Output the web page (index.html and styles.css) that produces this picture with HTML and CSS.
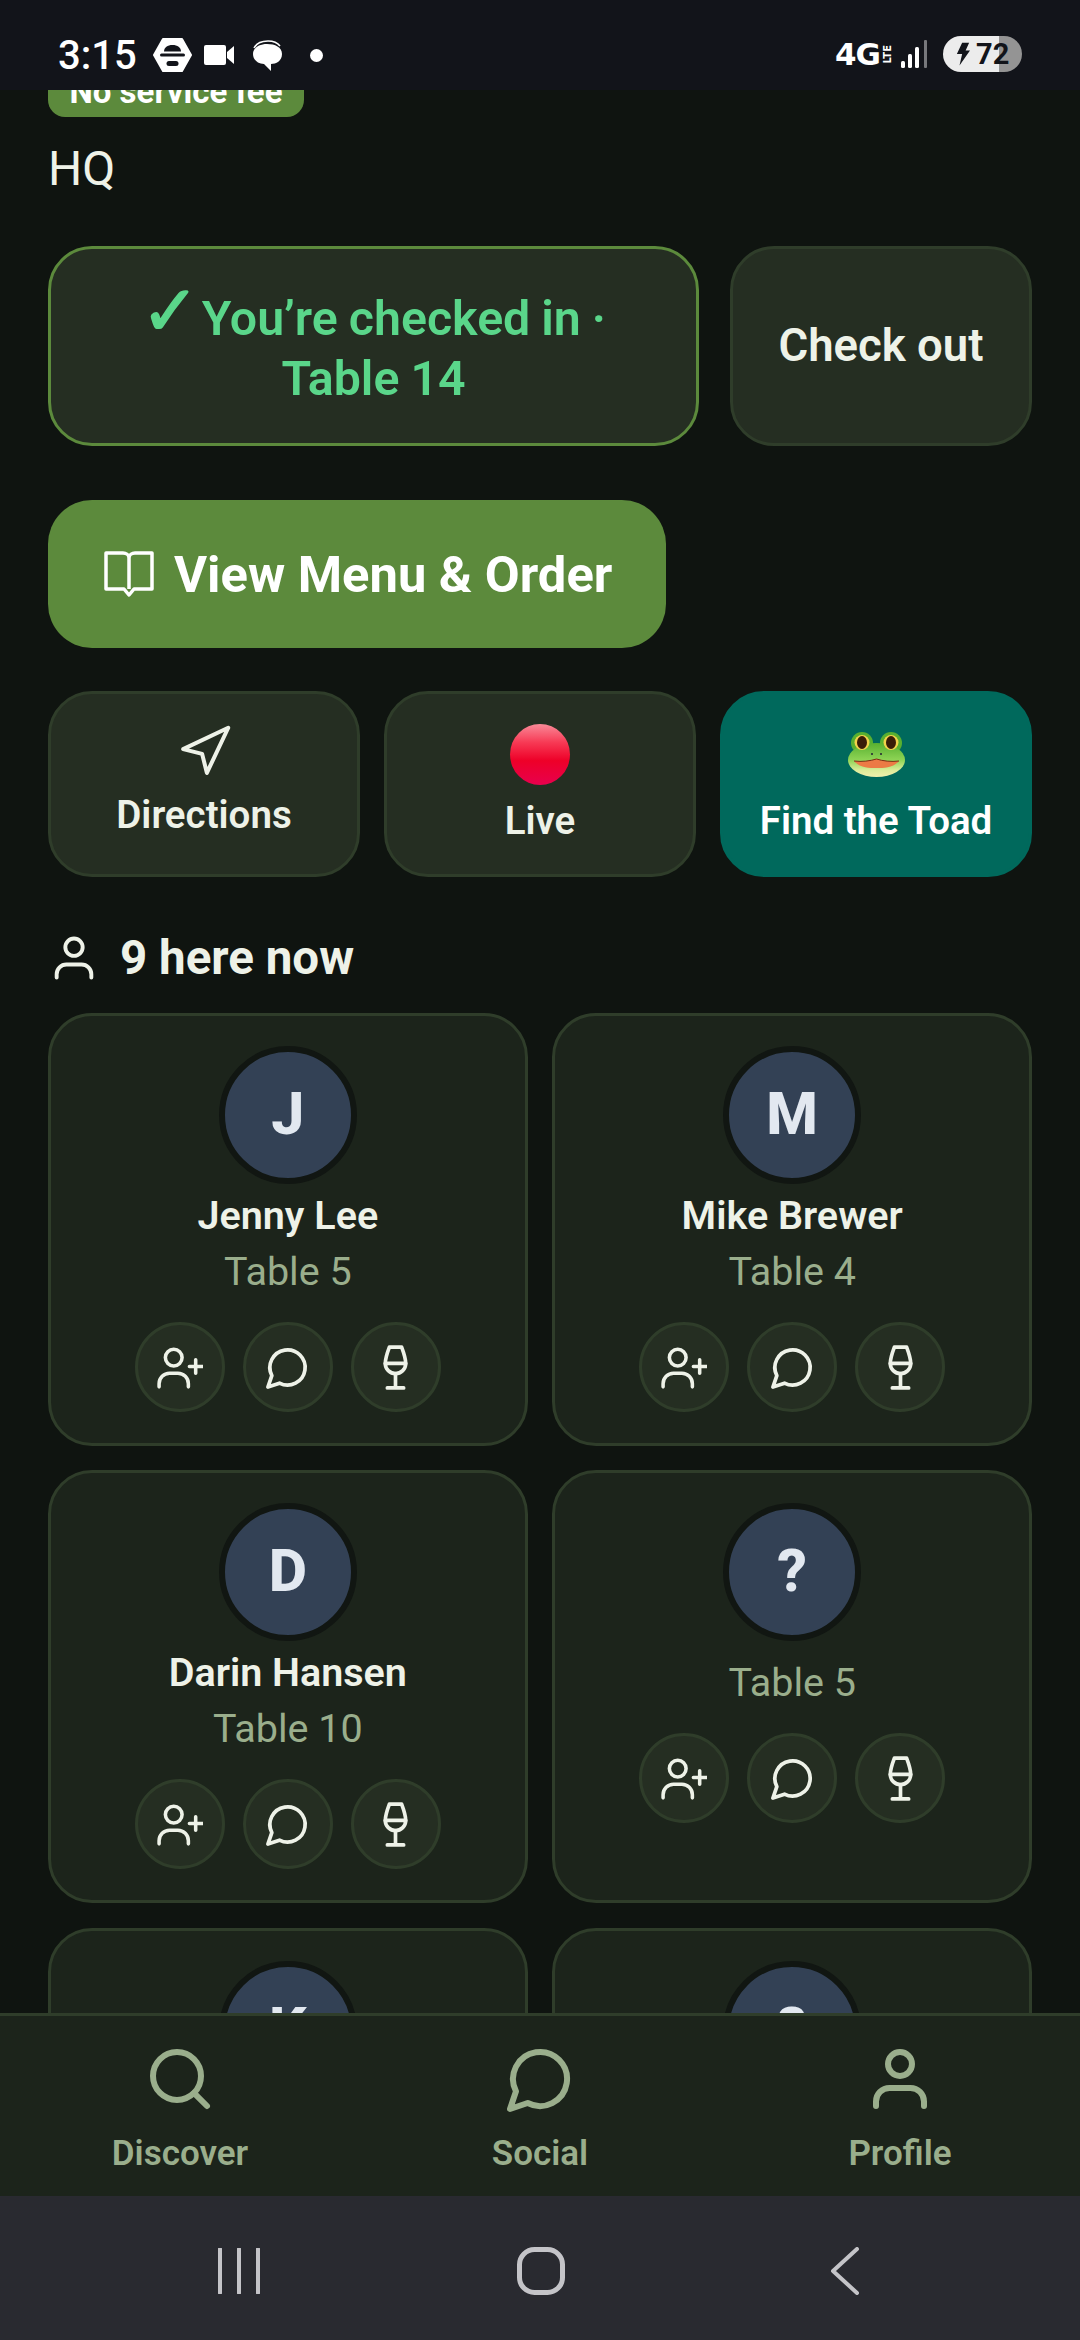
FILE: index.html
```html
<!DOCTYPE html>
<html lang="en">

<head>
    <meta charset="UTF-8">
    <title>HQ</title>
    <link rel="stylesheet" href="styles.css">
</head>

<body>
    <svg class="sprites" width="0" height="0">
        <symbol id="i-user" viewBox="0 0 24 24">
            <circle cx="12" cy="7" r="4" />
            <path d="M20 21v-1.5a4.5 4.5 0 0 0-4.5-4.5h-7a4.5 4.5 0 0 0-4.5 4.5v1.5" />
        </symbol>
        <symbol id="i-user-plus" viewBox="0 0 44 44">
            <circle cx="16" cy="13" r="8" />
            <path d="M2 41v-3a10 10 0 0 1 10-10h8a10 10 0 0 1 10 10v3" />
            <path d="M37 15v13M31 21.500h13" />
        </symbol>
        <symbol id="i-chat" viewBox="0 0 24 24">
            <path d="M7.900 20A9 9 0 1 0 4 16.100L2 22Z" />
        </symbol>
        <symbol id="i-wine" viewBox="0 0 24 24">
            <path d="M8 22h8M7 10h10M12 15v7" />
            <path d="M12 15a5 5 0 0 0 5-5c0-2-.5-4-2-8H9c-1.500 4-2 6-2 8a5 5 0 0 0 5 5Z" />
        </symbol>
    </svg>

    <header class="status-bar">
        <div class="status-left">
            <span class="clock">3:15</span>
            <svg class="st-hex" viewBox="0 0 39 34">
                <path d="M10 1h19l9 16-9 16H10L1 17z" fill="#fff" stroke="#fff" stroke-width="2" stroke-linejoin="round" />
                <path d="M11 13.500c0-4 3.500-6.500 8.500-6.500s8.500 2.500 8.500 6.500z" fill="#12141a" />
                <rect x="7" y="15.500" width="25" height="3" rx="1.500" fill="#12141a" />
                <rect x="13.500" y="23" width="12" height="5" rx="2.500" fill="#12141a" />
            </svg>
            <svg class="st-cam" viewBox="0 0 30 20">
                <rect x="0" y="0" width="22" height="20" rx="2" fill="#fff" />
                <path d="M23 7l7-6v18l-7-6z" fill="#fff" />
            </svg>
            <svg class="st-msg" viewBox="0 0 32 31">
                <path d="M3 8C6 2 12 1 17 1c5 0 9 1 12 5" fill="none" stroke="#fff" stroke-width="1.500" />
                <path d="M16 4c8 0 15 3 15 10s-6 10-11 10v7l-7-7C7 24 2 20 2 14S8 4 16 4z" fill="#fff" />
            </svg>
            <span class="st-dot"></span>
        </div>
        <div class="status-right">
            <span class="net">4G<small>LTE</small></span>
            <svg class="st-signal" viewBox="0 0 27 28">
                <rect x="0" y="21" width="4" height="7" rx="1.500" fill="#fff" />
                <rect x="7" y="14" width="4" height="14" rx="1.500" fill="#fff" />
                <rect x="14" y="7" width="4" height="21" rx="1.500" fill="#fff" />
                <rect x="23" y="0" width="3" height="28" rx="1" fill="#77787c" />
            </svg>
            <span class="battery">
                <svg class="st-bolt" viewBox="0 0 16 26">
                    <path d="M7 0h8l-4 9h5L4 26l3-13H1z" fill="#12141a" />
                </svg>
                <b>72</b>
            </span>
        </div>
    </header>

    <main class="page">
        <span class="pill">No service fee</span>
        <p class="venue">HQ</p>

        <div class="check-row">
            <button class="check-in"><span class="tick">✓</span> You’re checked in · Table 14</button>
            <button class="check-out">Check out</button>
        </div>

        <button class="menu-btn">
            <svg class="book" viewBox="0 0 50 46">
                <path d="M2 2h17c3 0 6 2 6 5 0-3 3-5 6-5h17v36H30l-5 6-5-6H2zM25 7v31" />
            </svg>
            View Menu &amp; Order
        </button>

        <div class="quick-row">
            <button class="quick">
                <svg class="nav-arrow" viewBox="0 0 24 24">
                    <polygon points="3 11 22 2 13 21 11 13 3 11" />
                </svg>
                <span>Directions</span>
            </button>
            <button class="quick">
                <span class="emoji-box"><span class="red-dot"></span></span>
                <span>Live</span>
            </button>
            <button class="quick toad">
                <span class="emoji-box">
                    <svg class="frog" viewBox="0 0 57 45">
                        <defs>
                            <linearGradient id="frogskin" x1="0" y1="0" x2="0" y2="1">
                                <stop offset="0" stop-color="#58b030" />
                                <stop offset="0.5" stop-color="#8ed455" />
                                <stop offset="0.8" stop-color="#dcec9a" />
                                <stop offset="1" stop-color="#f2f0ac" />
                            </linearGradient>
                        </defs>
                        <circle cx="14" cy="11" r="11" fill="#58b030" />
                        <circle cx="43" cy="11" r="11" fill="#58b030" />
                        <ellipse cx="28.500" cy="28" rx="28.500" ry="17" fill="url(#frogskin)" />
                        <circle cx="14" cy="10.500" r="7.500" fill="#f2d24a" />
                        <circle cx="43" cy="10.500" r="7.500" fill="#f2d24a" />
                        <ellipse cx="14" cy="10.500" rx="5" ry="6.500" fill="#3a1d08" />
                        <ellipse cx="43" cy="10.500" rx="5" ry="6.500" fill="#3a1d08" />
                        <circle cx="24" cy="22" r="1" fill="#223" />
                        <circle cx="33" cy="22" r="1" fill="#223" />
                        <path d="M6 29c8 1 16 0 22.500-2 6.500 2 14.500 3 22.500 2-6 7-15 7-22.500 7S12 36 6 29z" fill="#ec7a45" />
                        <path d="M6 29c8 1 16 0 22.500-2 6.500 2 14.500 3 22.500 2" fill="none" stroke="#7a2b14" stroke-width="1" />
                    </svg>
                </span>
                <span>Find the Toad</span>
            </button>
        </div>

        <h2 class="here-now">
            <svg class="here-icon"><use href="#i-user" /></svg>
            9 here now
        </h2>

        <div class="people">
            <div class="person">
                <div class="avatar">J</div>
                <div class="name">Jenny Lee</div>
                <div class="table">Table 5</div>
                <div class="actions">
                    <button class="round"><svg class="ic-plus"><use href="#i-user-plus" /></svg></button>
                    <button class="round"><svg class="ic"><use href="#i-chat" /></svg></button>
                    <button class="round"><svg class="ic-wine"><use href="#i-wine" /></svg></button>
                </div>
            </div>
            <div class="person">
                <div class="avatar">M</div>
                <div class="name">Mike Brewer</div>
                <div class="table">Table 4</div>
                <div class="actions">
                    <button class="round"><svg class="ic-plus"><use href="#i-user-plus" /></svg></button>
                    <button class="round"><svg class="ic"><use href="#i-chat" /></svg></button>
                    <button class="round"><svg class="ic-wine"><use href="#i-wine" /></svg></button>
                </div>
            </div>
            <div class="person">
                <div class="avatar">D</div>
                <div class="name">Darin Hansen</div>
                <div class="table">Table 10</div>
                <div class="actions">
                    <button class="round"><svg class="ic-plus"><use href="#i-user-plus" /></svg></button>
                    <button class="round"><svg class="ic"><use href="#i-chat" /></svg></button>
                    <button class="round"><svg class="ic-wine"><use href="#i-wine" /></svg></button>
                </div>
            </div>
            <div class="person">
                <div class="avatar">?</div>
                <div class="table no-name">Table 5</div>
                <div class="actions">
                    <button class="round"><svg class="ic-plus"><use href="#i-user-plus" /></svg></button>
                    <button class="round"><svg class="ic"><use href="#i-chat" /></svg></button>
                    <button class="round"><svg class="ic-wine"><use href="#i-wine" /></svg></button>
                </div>
            </div>
            <div class="person">
                <div class="avatar">K</div>
            </div>
            <div class="person">
                <div class="avatar">?</div>
            </div>
        </div>
    </main>

    <nav class="tabs">
        <a class="tab">
            <svg class="tab-icon" viewBox="0 0 24 24">
                <circle cx="11" cy="11" r="8" />
                <path d="M21 21l-4.300-4.300" />
            </svg>
            Discover
        </a>
        <a class="tab">
            <svg class="tab-icon"><use href="#i-chat" /></svg>
            Social
        </a>
        <a class="tab">
            <svg class="tab-icon"><use href="#i-user" /></svg>
            Profile
        </a>
    </nav>

    <footer class="system-nav">
        <svg class="sys-recent" viewBox="0 0 44 46">
            <path d="M3 1v44M22 1v44M41 1v44" />
        </svg>
        <svg class="sys-home" viewBox="0 0 48 48">
            <rect x="2.500" y="2.500" width="43" height="43" rx="15" />
        </svg>
        <svg class="sys-back" viewBox="0 0 30 48">
            <path d="M27 2L3 24l24 22" />
        </svg>
    </footer>
</body>

</html>
```

FILE: styles.css
```css
* {
    box-sizing: border-box;
}

body {
    margin: 0;
    width: 1080px;
    height: 2340px;
    display: flex;
    flex-direction: column;
    overflow: hidden;
    background-color: #0f1410;
    color: #eef2e8;
    font-family: Roboto, 'Noto Sans', sans-serif;
}

button {
    font-family: inherit;
    color: inherit;
    padding: 0;
}

.sprites {
    position: absolute;
}

/* status bar */
.status-bar {
    height: 90px;
    flex: none;
    display: flex;
    justify-content: space-between;
    background-color: #12141a;
    color: white;
    position: relative;
    z-index: 1;
}

.status-left {
    display: flex;
    align-items: center;
    padding-left: 58px;
    padding-top: 20px;
}

.clock {
    font-size: 40px;
    font-weight: 500;
    width: 95px;
}

.st-hex {
    width: 39px;
    height: 34px;
}

.st-cam {
    width: 30px;
    height: 20px;
    margin-left: 12px;
}

.st-msg {
    width: 32px;
    height: 31px;
    margin-left: 17px;
}

.st-dot {
    width: 13px;
    height: 13px;
    border-radius: 50%;
    background-color: white;
    margin-left: 27px;
}

.status-right {
    display: flex;
    align-items: center;
    padding-right: 58px;
    padding-top: 18px;
}

.net {
    display: flex;
    align-items: center;
    font-family: 'DejaVu Sans', sans-serif;
    font-weight: 700;
    font-size: 31px;
    letter-spacing: -1px;
    width: 66px;
    height: 24px;
}

.net small {
    writing-mode: vertical-rl;
    transform: rotate(180deg);
    font-size: 10px;
    letter-spacing: 0;
    margin-left: 2px;
}

.st-signal {
    width: 27px;
    height: 28px;
    margin-right: 15px;
}

.battery {
    width: 79px;
    height: 36px;
    border-radius: 18px;
    display: flex;
    align-items: center;
    padding-left: 13px;
    gap: 6px;
    color: #12141a;
    background: linear-gradient(to right, #ececec 56px, #949494 56px);
}

.battery b {
    font-size: 29px;
    font-weight: 700;
}

.st-bolt {
    width: 14px;
    height: 24px;
}

/* main scroll area */
.page {
    flex: 1;
    min-height: 0;
    overflow: hidden;
    padding: 0 48px;
}

.pill {
    display: block;
    width: 256px;
    height: 60px;
    margin-top: -33px;
    padding-top: 15px;
    text-align: center;
    font-size: 33px;
    font-weight: 700;
    line-height: 40px;
    color: white;
    background-color: #5c8a3c;
    border-radius: 17px;
}

.venue {
    margin: 25px 0 0;
    font-size: 48px;
    line-height: 53px;
}

.check-row {
    display: flex;
    gap: 31px;
    margin-top: 51px;
}

.check-in,
.check-out {
    height: 200px;
    border-radius: 44px;
    background-color: #252e22;
    line-height: 60px;
    font-weight: 600;
}

.check-in {
    width: 651px;
    padding: 5px 40px 0;
    border: 3px solid #5c8a3c;
    color: #5ad68a;
    font-size: 48.300px;
    word-spacing: -1px;
}

.tick {
    font-family: 'DejaVu Sans', sans-serif;
    font-weight: 700;
    font-size: 70px;
    line-height: 0;
    margin-right: -9px;
    -webkit-text-stroke: 1.5px #5ad68a;
}

.check-out {
    width: 302px;
    border: 3px solid #2f3d2a;
    font-size: 45.500px;
    color: #eef2e8;
}

.menu-btn {
    display: flex;
    align-items: center;
    gap: 20px;
    width: 618px;
    height: 148px;
    margin-top: 54px;
    padding-left: 56px;
    border: none;
    border-radius: 44px;
    background-color: #5c8a3c;
    color: white;
    font-size: 50.700px;
    font-weight: 700;
}

.book {
    width: 50px;
    height: 46px;
    flex: none;
    fill: none;
    stroke: white;
    stroke-width: 3.500;
    stroke-linejoin: round;
}

.quick-row {
    display: grid;
    grid-template-columns: repeat(3, 1fr);
    gap: 24px;
    margin-top: 43px;
}

.quick {
    height: 186px;
    display: flex;
    flex-direction: column;
    align-items: center;
    padding-top: 29px;
    border: 3px solid #2f3d2a;
    border-radius: 44px;
    background-color: #252e22;
    font-size: 38.500px;
    line-height: 46px;
    font-weight: 600;
}

.quick.toad {
    background-color: #00695c;
    border-color: #00695c;
    color: white;
}

.nav-arrow {
    width: 57px;
    height: 57px;
    margin-bottom: 12px;
    fill: none;
    stroke: #eef2e8;
    stroke-width: 1.700;
    stroke-linejoin: round;
    stroke-linecap: round;
}

.emoji-box {
    height: 63px;
    margin-bottom: 12px;
    display: flex;
    align-items: center;
    justify-content: center;
}

.red-dot {
    width: 60px;
    height: 61px;
    border-radius: 50%;
    background: linear-gradient(to bottom, #f98a98 0%, #f73a55 30%, #ee0028 60%, #e8004e 100%);
}

.frog {
    width: 57px;
    height: 45px;
}

.here-now {
    display: flex;
    align-items: center;
    gap: 20px;
    height: 52px;
    margin: 55px 0 0;
    font-size: 47.500px;
    font-weight: 700;
}

.here-icon {
    width: 52px;
    height: 52px;
    flex: none;
    fill: none;
    stroke: #eef2e8;
    stroke-width: 1.800;
    stroke-linecap: round;
}

/* people grid */
.people {
    display: grid;
    grid-template-columns: 1fr 1fr;
    gap: 24.750px;
    margin-top: 29px;
}

.person {
    min-height: 432.500px;
    display: flex;
    flex-direction: column;
    align-items: center;
    padding-top: 30px;
    border: 3px solid #2f3d2a;
    border-radius: 44px;
    background-color: #1c241b;
}

.avatar {
    width: 138px;
    height: 138px;
    flex: none;
    display: flex;
    align-items: center;
    justify-content: center;
    padding-bottom: 3px;
    border: 6px solid #111612;
    border-radius: 50%;
    background-color: #334155;
    color: #e2e8f0;
    font-size: 59px;
    font-weight: 800;
}

.name {
    margin-top: 9px;
    font-size: 39.500px;
    line-height: 46px;
    font-weight: 600;
}

.table {
    margin-top: 10px;
    font-size: 39.500px;
    line-height: 46px;
    color: #9aae8c;
}

.table.no-name {
    margin-top: 19px;
}

.actions {
    display: flex;
    gap: 18px;
    margin-top: 27px;
}

.round {
    width: 90px;
    height: 90px;
    display: flex;
    align-items: center;
    justify-content: center;
    border: 3px solid #2f3d2a;
    border-radius: 50%;
    background-color: #252e22;
}

.ic,
.ic-wine,
.ic-plus {
    fill: none;
    stroke: #eef2e8;
    stroke-linecap: round;
    stroke-linejoin: round;
}

.ic {
    width: 47px;
    height: 47px;
    stroke-width: 1.900;
}

.ic-wine {
    width: 49px;
    height: 49px;
    stroke-width: 1.800;
}

.ic-plus {
    width: 46px;
    height: 46px;
    stroke-width: 3.400;
}

/* bottom tabs */
.tabs {
    height: 183px;
    flex: none;
    display: grid;
    grid-template-columns: repeat(3, 1fr);
    border-top: 3px solid #2f3d2a;
    background-color: #1c241b;
}

.tab {
    display: flex;
    flex-direction: column;
    align-items: center;
    padding-top: 27px;
    gap: 16px;
    font-size: 35px;
    line-height: 46px;
    font-weight: 600;
    color: #9aae8c;
}

.tab-icon {
    width: 72px;
    height: 72px;
    fill: none;
    stroke: #9aae8c;
    stroke-width: 2;
    stroke-linecap: round;
    stroke-linejoin: round;
}

/* android nav */
.system-nav {
    height: 144px;
    flex: none;
    display: flex;
    align-items: center;
    padding: 6px 0 0 217px;
    background-color: #292a30;
}

.system-nav svg {
    flex: none;
    fill: none;
    stroke: #c4c4c8;
    stroke-linecap: round;
    stroke-linejoin: round;
}

.sys-recent {
    width: 44px;
    height: 46px;
    stroke-width: 4;
}

.sys-home {
    width: 48px;
    height: 48px;
    margin-left: 256px;
    stroke-width: 5;
}

.sys-back {
    width: 30px;
    height: 48px;
    margin-left: 265px;
    stroke-width: 4;
}
```
